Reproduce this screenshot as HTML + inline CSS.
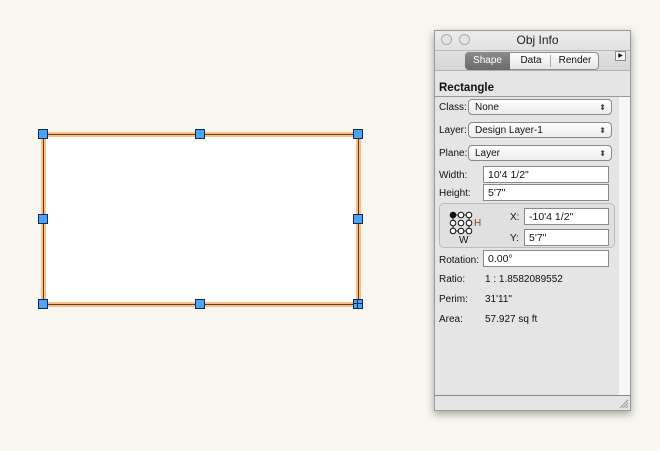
<!DOCTYPE html>
<html><head><style>
*{margin:0;padding:0;box-sizing:border-box}
body{width:660px;height:451px;background:#f7f6ef;position:relative;overflow:hidden;font-family:"Liberation Sans",sans-serif;font-size:10px;color:#111}
.a{position:absolute}
.h{position:absolute;width:10px;height:10px;background:#4aa3f5;border:1px solid #0d2a55}
.pop{position:absolute;left:468px;width:144px;height:16px;border:1px solid #8a8a8a;border-radius:4px;background:linear-gradient(#fff,#ececec);padding-left:6px;line-height:15px;font-size:10px}
.pop:after{content:"⬍";position:absolute;right:5px;top:0;font-size:8px;color:#444}
.lab{position:absolute;left:439px;font-size:10px}
.fld{position:absolute;background:#fff;border:1px solid #8a8a8a;height:17px;padding-left:4px;line-height:16px;font-size:10.5px}
</style></head><body>
<!-- rectangle -->
<div class="a" style="left:41px;top:132px;width:320px;height:175px;border:5px solid #f7c08a"></div>
<div class="a" style="left:43px;top:134px;width:316px;height:171px;border:1px solid #6a3a10"></div>
<div class="a" style="left:46px;top:137px;width:310px;height:165px;background:#fff"></div>
<div class="h" style="left:38px;top:129px"></div>
<div class="h" style="left:195px;top:129px"></div>
<div class="h" style="left:353px;top:129px"></div>
<div class="h" style="left:38px;top:214px"></div>
<div class="h" style="left:353px;top:214px"></div>
<div class="h" style="left:38px;top:299px"></div>
<div class="h" style="left:195px;top:299px"></div>
<div class="h" style="left:353px;top:299px;background:linear-gradient(#0d2a55,#0d2a55) 3px 0/1px 100% no-repeat,linear-gradient(#0d2a55,#0d2a55) 0 3px/100% 1px no-repeat,#4aa3f5"></div>
<!-- panel -->
<div class="a" style="left:434px;top:30px;width:197px;height:381px;background:#e5e5e5;border:1px solid #9a9a9a;box-shadow:0 3px 8px rgba(0,0,0,.35)"></div>
<div class="a" style="left:435px;top:31px;width:195px;height:40px;background:linear-gradient(#ececec,#d6d6d6);border-bottom:1px solid #b0b0b0"></div>
<div class="a" style="left:441px;top:34px;width:11px;height:11px;border-radius:50%;border:1px solid #aaa;background:#e4e4e4"></div>
<div class="a" style="left:459px;top:34px;width:11px;height:11px;border-radius:50%;border:1px solid #aaa;background:#e4e4e4"></div>
<div class="a" style="left:435px;top:33px;width:195px;text-align:center;font-size:12px;line-height:14px;color:#222;padding-left:10px">Obj Info</div>
<div class="a" style="left:435px;top:50px;width:195px;height:1px;background:#b8b8b8"></div>
<div class="a" style="left:465px;top:52px;width:134px;height:18px;border:1px solid #8f8f8f;border-radius:4px;background:linear-gradient(#fdfdfd,#e6e6e6)"></div>
<div class="a" style="left:465px;top:52px;width:45px;height:18px;border-radius:4px 0 0 4px;background:linear-gradient(#8c8c8c,#6a6a6a);color:#fff;text-align:center;line-height:18px;font-size:10px">Shape</div>
<div class="a" style="left:512px;top:52px;width:38px;height:18px;text-align:center;line-height:18px;font-size:10px">Data</div>
<div class="a" style="left:550px;top:55px;width:1px;height:12px;background:#aaa"></div>
<div class="a" style="left:552px;top:52px;width:46px;height:18px;text-align:center;line-height:18px;font-size:10px">Render</div>
<div class="a" style="left:615px;top:51px;width:11px;height:10px;border:1px solid #888;background:#f4f4f4;font-size:6px;line-height:8px;text-align:center">▶</div>
<div class="a" style="left:439px;top:81px;font-size:11.5px;line-height:14px;font-weight:bold">Rectangle</div>
<div class="a" style="left:435px;top:96px;width:195px;height:1px;background:#999"></div>
<div class="a" style="left:619px;top:97px;width:11px;height:298px;background:#f7f7f7"></div>
<div class="lab" style="top:102px">Class:</div><div class="pop" style="top:99px">None</div>
<div class="lab" style="top:125px">Layer:</div><div class="pop" style="top:122px">Design Layer-1</div>
<div class="lab" style="top:148px">Plane:</div><div class="pop" style="top:145px">Layer</div>
<div class="lab" style="top:170px">Width:</div><div class="fld" style="left:483px;top:166px;width:126px">10'4 1/2"</div>
<div class="lab" style="top:188px">Height:</div><div class="fld" style="left:483px;top:184px;width:126px">5'7"</div>
<div class="a" style="left:439px;top:203px;width:176px;height:45px;border:1px solid #bbb;border-radius:5px;background:#e0e0e0"></div>
<svg class="a" style="left:449px;top:211px" width="40" height="24" viewBox="0 0 40 24"><g fill="#fff" stroke="#111" stroke-width="1"><line x1="4" y1="4" x2="20" y2="4"/><line x1="4" y1="20" x2="20" y2="20"/><line x1="4" y1="4" x2="4" y2="20"/><line x1="20" y1="4" x2="20" y2="20"/><circle cx="4" cy="4" r="2.8" fill="#111"/><circle cx="12" cy="4" r="2.8"/><circle cx="20" cy="4" r="2.8"/><circle cx="4" cy="12" r="2.8"/><circle cx="12" cy="12" r="2.8"/><circle cx="20" cy="12" r="2.8"/><circle cx="4" cy="20" r="2.8"/><circle cx="12" cy="20" r="2.8"/><circle cx="20" cy="20" r="2.8"/></g></svg>
<div class="a" style="left:474px;top:218px;font-size:10px;color:#7a4a10">H</div>
<div class="a" style="left:459px;top:235px;font-size:10px">W</div>
<div class="a" style="left:510px;top:212px">X:</div><div class="fld" style="left:524px;top:208px;width:85px">-10'4 1/2"</div>
<div class="a" style="left:510px;top:233px">Y:</div><div class="fld" style="left:524px;top:229px;width:85px">5'7"</div>
<div class="lab" style="top:255px">Rotation:</div><div class="fld" style="left:483px;top:250px;width:126px">0.00°</div>
<div class="lab" style="top:274px">Ratio:</div><div class="a" style="left:485px;top:274px">1 : 1.8582089552</div>
<div class="lab" style="top:294px">Perim:</div><div class="a" style="left:485px;top:294px">31'11"</div>
<div class="lab" style="top:314px">Area:</div><div class="a" style="left:485px;top:314px">57.927 sq ft</div>
<div class="a" style="left:435px;top:395px;width:195px;height:1px;background:#888"></div>
<svg class="a" style="left:619px;top:399px" width="10" height="10"><g stroke="#999"><line x1="1" y1="9" x2="9" y2="1"/><line x1="4" y1="9" x2="9" y2="4"/><line x1="7" y1="9" x2="9" y2="7"/></g></svg>
</body></html>
